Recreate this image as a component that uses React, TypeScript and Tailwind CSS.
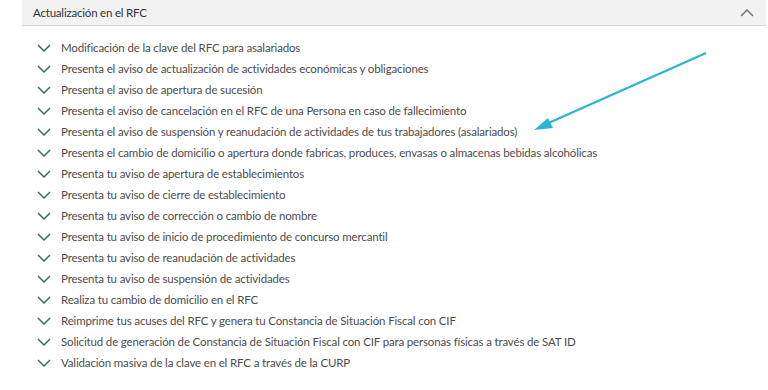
import { FC } from 'react';

const items = [
  'Modificación de la clave del RFC para asalariados',
  'Presenta el aviso de actualización de actividades económicas y obligaciones',
  'Presenta el aviso de apertura de sucesión',
  'Presenta el aviso de cancelación en el RFC de una Persona en caso de fallecimiento',
  'Presenta el aviso de suspensión y reanudación de actividades de tus trabajadores (asalariados)',
  'Presenta el cambio de domicilio o apertura donde fabricas, produces, envasas o almacenas bebidas alcohólicas',
  'Presenta tu aviso de apertura de establecimientos',
  'Presenta tu aviso de cierre de establecimiento',
  'Presenta tu aviso de corrección o cambio de nombre',
  'Presenta tu aviso de inicio de procedimiento de concurso mercantil',
  'Presenta tu aviso de reanudación de actividades',
  'Presenta tu aviso de suspensión de actividades',
  'Realiza tu cambio de domicilio en el RFC',
  'Reimprime tus acuses del RFC y genera tu Constancia de Situación Fiscal con CIF',
  'Solicitud de generación de Constancia de Situación Fiscal con CIF para personas físicas a través de SAT ID',
  'Validación masiva de la clave en el RFC a través de la CURP',
];

const ChevronDown: FC = () => (
  <svg width="14" height="8" viewBox="0 0 14 8" className="shrink-0">
    <path d="M1 1 L7 7 L13 1" fill="none" stroke="#3a7050" strokeWidth="1.5" />
  </svg>
);

export default function App() {
  return (
    <div className="relative w-[768px] h-[390px] bg-white overflow-hidden" style={{ fontFamily: 'Lato, "Noto Sans", sans-serif' }}>
      <div className="ml-[22px] mr-[2px] h-[26px] bg-[#f2f2f2] border-b border-[#d9d9d9] flex items-center justify-between pl-[11px] pr-[12px]">
        <span className="text-[11.5px] tracking-[-0.2px] text-[#333]">Actualización en el RFC</span>
        <svg width="14" height="8" viewBox="0 0 14 8">
          <path d="M1 7 L7 1 L13 7" fill="none" stroke="#6b6b6b" strokeWidth="1.4" />
        </svg>
      </div>

      <ul className="pt-[11px] pl-[37px] flex flex-col">
        {items.map((t) => (
          <li key={t} className="h-[21px] flex items-center gap-[10px] text-[11.5px] tracking-[-0.15px] text-[#4d4d4d] whitespace-nowrap">
            <ChevronDown />
            <span>{t}</span>
          </li>
        ))}
      </ul>

      {/* annotation arrow */}
      <svg className="absolute left-0 top-0 pointer-events-none" width="768" height="390">
        <line x1="706" y1="53" x2="544" y2="125" stroke="#29b5d3" strokeWidth="2.2" />
        <polygon points="534,130 548,118 553,128" fill="#29b5d3" />
      </svg>
    </div>
  );
}
